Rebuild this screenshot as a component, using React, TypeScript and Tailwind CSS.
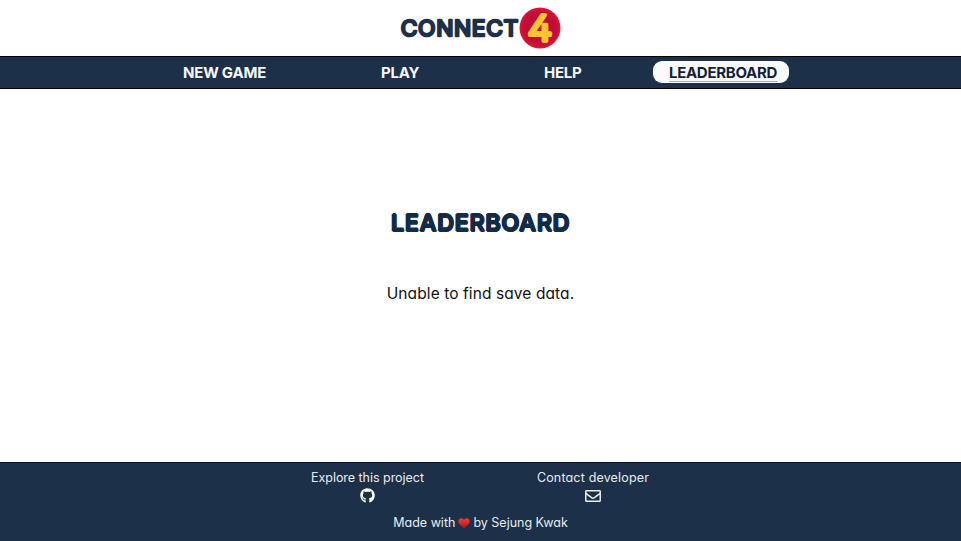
import { FaGithub, FaRegEnvelope } from "react-icons/fa";

function Logo() {
  return (
    <svg width="162" height="44" viewBox="0 0 162 44" role="img" aria-label="Connect 4">
      <defs>
        <radialGradient id="disc">
          <stop offset="0.6" stopColor="#bd0d39" />
          <stop offset="0.85" stopColor="#c90f38" />
          <stop offset="1" stopColor="#e01638" />
        </radialGradient>
      </defs>
      <text
        x="0.800"
        y="30"
        textLength="118"
        lengthAdjust="spacingAndGlyphs"
        className="fill-[#1c3049] stroke-[#1c3049] font-['Inter',sans-serif] text-[22px] font-normal tracking-[0.6px] [stroke-linejoin:round] [stroke-width:2.4px]"
      >
        CONNECT
      </text>
      <circle cx="140" cy="22" r="20.5" fill="url(#disc)" />
      <text
        x="127.500"
        y="35"
        textLength="25"
        lengthAdjust="spacingAndGlyphs"
        className="fill-[#fdc431] stroke-[#fdc431] font-['Inter',sans-serif] text-[36px] font-light [font-feature-settings:'cv02'] [stroke-linejoin:round] [stroke-width:3.8px]"
      >
        4
      </text>
    </svg>
  );
}

export default function App() {
  return (
    <div className="flex h-[541px] w-full flex-col bg-white font-['Inter',sans-serif] [font-feature-settings:'cv11']">
      <header className="flex h-14 shrink-0 items-center justify-center">
        <Logo />
      </header>
      <nav className="flex h-[33px] shrink-0 items-center border-y border-black bg-[#1c3049] pl-[183px] text-[15px] font-bold text-[#f8f9fb]">
        <a className="w-[198px] whitespace-nowrap pt-px tracking-[-0.2px]">NEW GAME</a>
        <a className="w-[163px] pt-0.5 tracking-[-0.2px]">PLAY</a>
        <a className="w-[109px] pt-0.5 tracking-[-0.3px]">HELP</a>
        <a className="mb-px flex h-[22px] w-[136px] items-center justify-end rounded-[9px] bg-[#fafafa] pt-[3px] pr-[12px] text-[#121f3b]">
          <span className="border-b border-[#a9adb5] leading-[16px] tracking-[-0.3px]">LEADERBOARD</span>
        </a>
      </nav>
      <main className="flex flex-1 flex-col items-center pt-[117px]">
        <h1 className="text-[23.5px] leading-[34px] font-semibold tracking-[0.55px] text-[#142b48] [text-shadow:0.8px_0_#142b48,-0.8px_0_#142b48,0_0.8px_#142b48,0_-0.8px_#142b48,0.5px_0.5px_#142b48,-0.5px_-0.5px_#142b48]">
          LEADERBOARD
        </h1>
        <p className="mt-[42px] text-[15.5px] leading-6 tracking-[0.09px] text-[#111]">Unable to find save data.</p>
      </main>
      <footer className="flex h-[79px] shrink-0 flex-col items-center border-t border-[#0b1238] bg-[#1c3049] pt-[6px] text-[12.5px] leading-[18px] text-[#e9ebef]">
        <div className="flex">
          <div className="flex w-[226px] flex-col items-center">
            <span className="tracking-[-0.03px]">Explore this project</span>
            <FaGithub className="mt-px size-[15px] text-white" />
          </div>
          <div className="flex w-[226px] flex-col items-center pr-px">
            <span className="tracking-[0.17px]">Contact developer</span>
            <FaRegEnvelope className="mt-px size-[16px]" />
          </div>
        </div>
        <p className="mt-[10px] flex items-center gap-[3px]">
          Made with
          <svg width="12" height="11" viewBox="0 0 12 11" aria-label="love">
            <defs>
              <linearGradient id="heart" x1="0" y1="0" x2="0" y2="1">
                <stop offset="0" stopColor="#e8413c" />
                <stop offset="1" stopColor="#a90d12" />
              </linearGradient>
            </defs>
            <path d="M6 11C4 8 0 6.500 .3 3C.6 0 4.800-.7 6 2.200C7.200-.7 11.400 0 11.700 3C12 6.500 8 8 6 11Z" fill="url(#heart)" />
          </svg>
          by Sejung Kwak
        </p>
      </footer>
    </div>
  );
}
